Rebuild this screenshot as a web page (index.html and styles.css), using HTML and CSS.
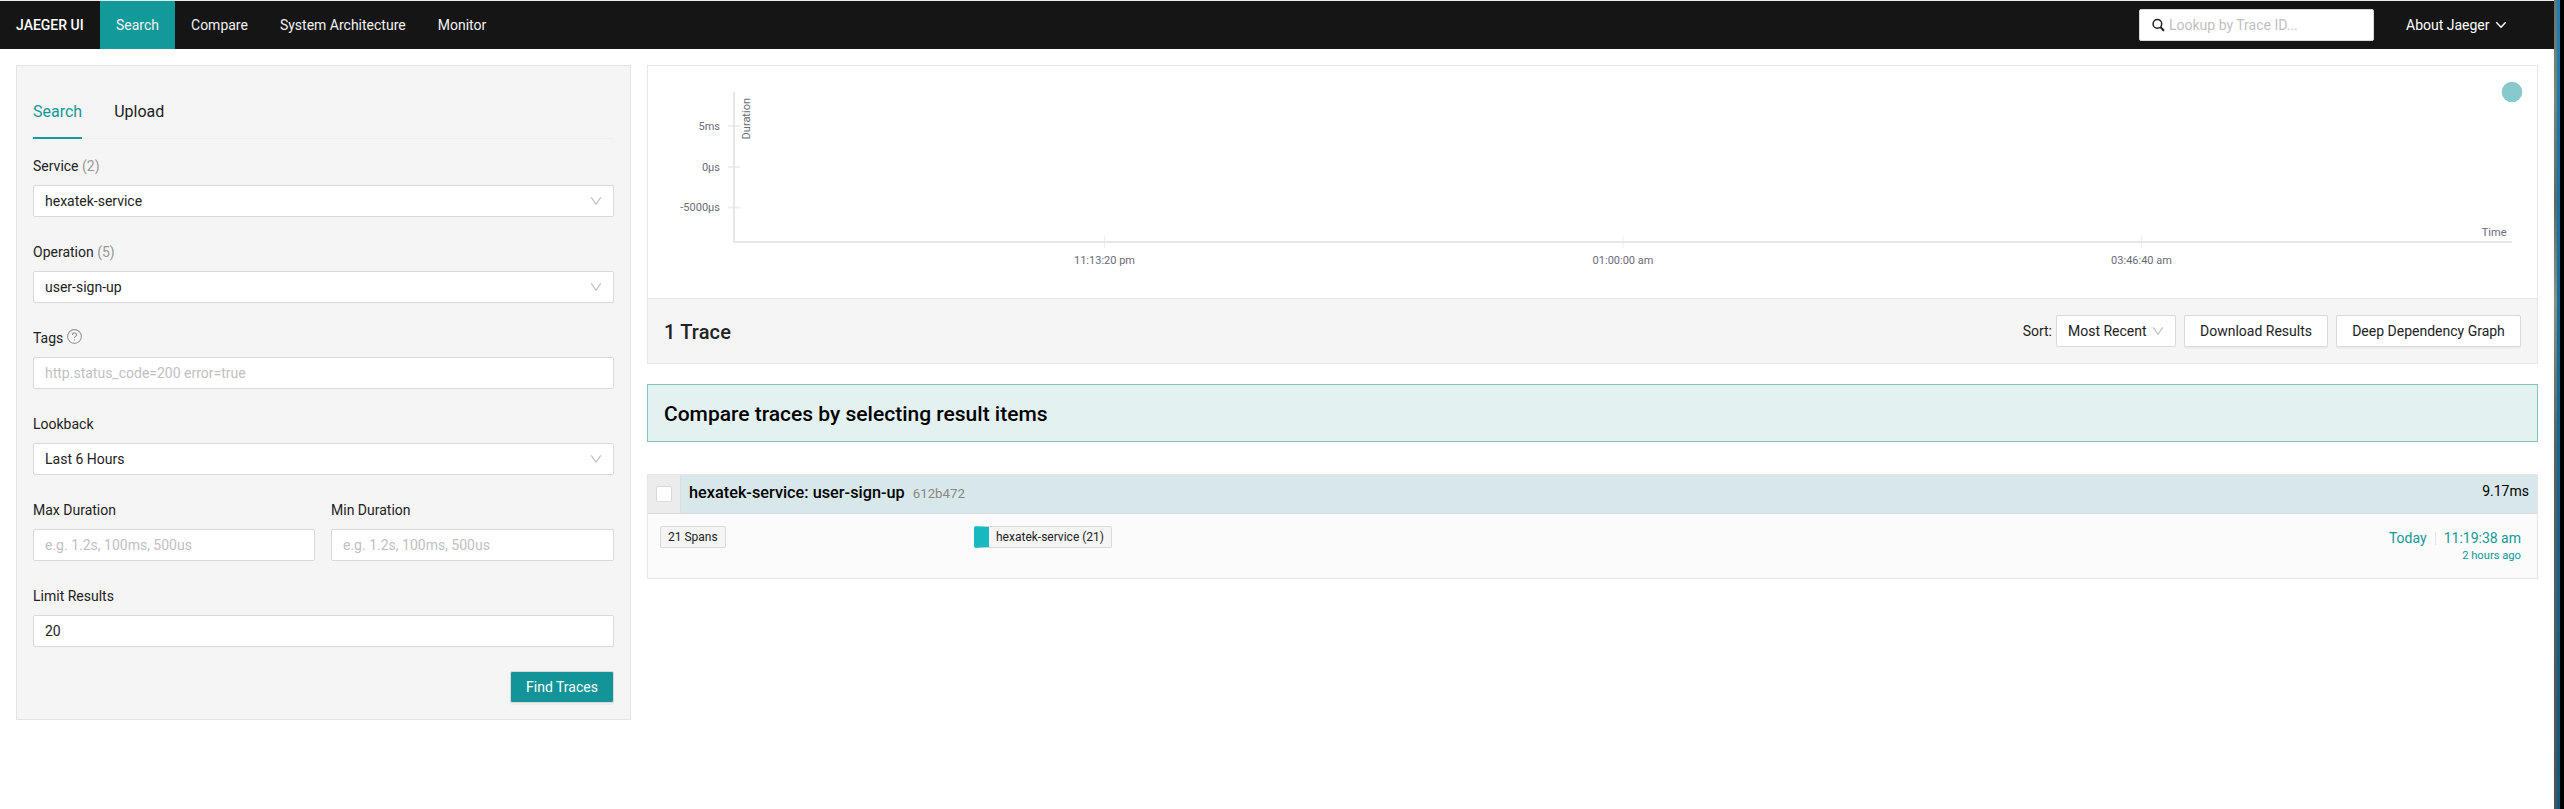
FILE: index.html
```html
<!DOCTYPE html>
<html lang="en">
<head>
<meta charset="utf-8">
<title>Jaeger UI</title>
<link rel="stylesheet" href="styles.css">
</head>
<body>
<div class="app">
  <div class="page">
    <nav class="nav">
      <a class="nav-item brand">JAEGER UI</a>
      <a class="nav-item active">Search</a>
      <a class="nav-item">Compare</a>
      <a class="nav-item">System Architecture</a>
      <a class="nav-item">Monitor</a>
      <div class="lookup">
        <svg class="lookup-icon" viewBox="0 0 13 14"><circle cx="5.4" cy="5.9" r="4.3" fill="none" stroke="#222" stroke-width="1.500"/><path d="M8.6 9.2 12 12.800" stroke="#222" stroke-width="2"/></svg>
        <span class="placeholder">Lookup by Trace ID...</span>
      </div>
      <a class="about">About Jaeger <svg class="about-icon" viewBox="0 0 12 8"><path d="M1.3 1.3 6 6.2l4.700-4.900" fill="none" stroke="#fff" stroke-width="1.5"/></svg></a>
    </nav>
    <main class="main">
      <aside class="panel">
        <div class="tabs"><span class="tab selected">Search</span><span class="tab">Upload</span></div>
        <div class="field"><div class="label">Service <span class="muted">(2)</span></div>
          <div class="control"><span>hexatek-service</span><svg class="caret" viewBox="0 0 12 12"><path d="M1.200 2.300 6 9.300l4.800-7"/></svg></div></div>
        <div class="field"><div class="label">Operation <span class="muted">(5)</span></div>
          <div class="control"><span>user-sign-up</span><svg class="caret" viewBox="0 0 12 12"><path d="M1.200 2.300 6 9.300l4.800-7"/></svg></div></div>
        <div class="field"><div class="label">Tags <svg class="help" viewBox="0 0 14 14"><circle cx="7" cy="7" r="6.400"/><path d="M5.100 5.600C5.100 3 8.900 3 8.900 5.500 8.900 7 7 6.900 7 8.500M7 9.600v1.100"/></svg></div>
          <div class="control"><span class="placeholder">http.status_code=200 error=true</span></div></div>
        <div class="field"><div class="label">Lookback</div>
          <div class="control"><span>Last 6 Hours</span><svg class="caret" viewBox="0 0 12 12"><path d="M1.200 2.300 6 9.300l4.800-7"/></svg></div></div>
        <div class="pair">
          <div class="field"><div class="label">Max Duration</div><div class="control"><span class="placeholder">e.g. 1.2s, 100ms, 500us</span></div></div>
          <div class="field"><div class="label">Min Duration</div><div class="control"><span class="placeholder">e.g. 1.2s, 100ms, 500us</span></div></div>
        </div>
        <div class="field"><div class="label">Limit Results</div><div class="control"><span>20</span></div></div>
        <div class="actions"><button class="find">Find Traces</button></div>
      </aside>
      <section class="results">
        <div class="summary">
          <svg class="chart" width="1889" height="232" viewBox="648 66 1889 232">
            <g class="ticks">
              <path d="M728 126h12M728 167h12M728 207.500h12" stroke-width="2"/>
              <path d="M1104.500 236v12M1623 236v12M2141.500 236v12"/>
            </g>
            <path class="axis" d="M734 92v150M734 242h1778"/>
            <g class="tick-text">
              <text x="720" y="130" text-anchor="end">5ms</text>
              <text x="720" y="171" text-anchor="end">0μs</text>
              <text x="720" y="211" text-anchor="end">-5000μs</text>
              <text x="1104.500" y="264" text-anchor="middle">11:13:20 pm</text>
              <text x="1623" y="264" text-anchor="middle">01:00:00 am</text>
              <text x="2141.500" y="264" text-anchor="middle">03:46:40 am</text>
              <text x="2506.500" y="236" text-anchor="end">Time</text>
              <text transform="translate(750 98) rotate(-90)" text-anchor="end">Duration</text>
            </g>
            <circle class="dot" cx="2512" cy="92" r="10.300"/>
          </svg>
          <div class="toolbar">
            <h2 class="count">1 Trace</h2>
            <span class="sort">Sort:</span>
            <div class="control sort-select"><span>Most Recent</span><svg class="caret" viewBox="0 0 12 12"><path d="M1.200 2.300 6 9.300l4.800-7"/></svg></div>
            <button class="btn download">Download Results</button>
            <button class="btn graph">Deep Dependency Graph</button>
          </div>
        </div>
        <div class="compare">Compare traces by selecting result items</div>
        <article class="trace">
          <header class="trace-head">
            <div class="check-cell"><span class="check"></span></div>
            <div class="trace-title"><span class="name">hexatek-service: user-sign-up</span><span class="id">612b472</span><span class="duration">9.17ms</span></div>
          </header>
          <div class="trace-body">
            <div class="span-col"><span class="tag">21 Spans</span></div>
            <div class="service-col"><span class="tag service">hexatek-service (21)</span></div>
            <div class="when">
              <div class="when-line"><span>Today</span><i class="divider"></i><span>11:19:38 am</span></div>
              <small class="ago">2 hours ago</small>
            </div>
          </div>
        </article>
      </section>
    </main>
  </div>
  <div class="wallpaper"></div>
</div>
</body>
</html>
```
FILE: styles.css
```css
* { box-sizing: border-box; }
body { margin: 0; background: #fff; color: #222; font: 14px/21px Roboto, sans-serif; }
.app { display: flex; height: 809px; overflow: hidden; }
.page { width: 2554px; border-top: 1px solid #e8ebeb; }
.nav { display: flex; align-items: center; height: 48px; background: #151515; color: #fff; }
.nav-item { padding: 0 16px; line-height: 48px; color: #f2f2f2; }
.brand { width: 100px; font-weight: 500; color: #fff; white-space: nowrap; }
.active { background: #129999; }
.lookup { display: flex; align-items: center; width: 235px; height: 32px; margin-left: auto; padding-left: 12px; background: #fff; border: 1px solid #d9d9d9; border-radius: 2px; }
.lookup-icon { width: 13px; height: 14px; margin-right: 4px; }
.placeholder { color: #bfbfbf; }
.about { display: flex; align-items: center; justify-content: space-between; width: 101px; margin: 0 47px 0 32px; white-space: nowrap; }
.about-icon { width: 12px; height: 8px; }
.main { display: flex; gap: 16px; align-items: flex-start; padding: 16px; }
.panel { width: 615px; height: 655px; padding: 16px; background: #f5f5f5; border: 1px solid #e4e4e4; }
.tabs { display: flex; gap: 32px; height: 57px; margin-bottom: 16px; border-bottom: 1px solid #eee; font-size: 16px; line-height: 59px; }
.tab { height: 57px; }
.selected { color: #129999; border-bottom: 2px solid #129999; }
.field { flex: 1; height: 86px; }
.label { height: 30px; line-height: 22px; }
.muted { color: #999; }
.control { display: flex; align-items: center; justify-content: space-between; height: 32px; padding: 0 11px; background: #fff; border: 1px solid #d9d9d9; border-radius: 2px; }
.caret { width: 12px; height: 12px; fill: none; stroke: #bfbfbf; stroke-width: 1.2; }
.help { width: 15px; height: 15px; vertical-align: -1px; fill: none; stroke: #999; stroke-width: 1; }
.pair { display: grid; grid-template-columns: 282px 283px; gap: 16px; }
.actions { display: flex; justify-content: flex-end; }
.find, .btn { height: 32px; padding: 0; font: inherit; border: 1px solid #d9d9d9; border-radius: 2px; box-shadow: 0 2px 0 rgba(0, 0, 0, .03); }
.find { width: 104px; background: #129499; color: #fff; }
.results { width: 1891px; }
.summary { height: 299px; border: 1px solid #e6e6e6; }
.chart { display: block; }
.ticks { stroke: #eee; }
.axis { fill: none; stroke: #e6e6e9; stroke-width: 2; }
.tick-text { fill: #6b6b76; font-size: 11px; }
.dot { fill: #88c9cb; }
.toolbar { display: flex; align-items: center; height: 65px; padding: 0 16px; background: #f5f5f5; border-top: 1px solid #e6e6e6; }
.count { margin: 0 auto 0 0; padding-top: 2px; font-size: 20px; font-weight: 500; letter-spacing: .15px; }
.sort { margin-right: 4px; }
.sort-select { width: 120px; }
.btn { margin-left: 8px; background: #fff; color: #222; }
.download { width: 144px; }
.graph { width: 185px; }
.compare { height: 58px; margin-top: 20px; padding-left: 16px; background: #e4f1f1; border: 1px solid #7fc4bd; color: #000; font-size: 21px; font-weight: 500; line-height: 58px; }
.trace { height: 105px; margin-top: 32px; background: #fbfbfb; border: 1px solid #e6e6e6; }
.trace-head { display: flex; height: 39px; border-bottom: 1px solid #d6dadb; }
.check-cell { width: 33px; padding: 11px 8px; background: #ececec; border-right: 1px solid #ddd; }
.check { display: block; width: 16px; height: 16px; background: #fff; border: 1px solid #d9d9d9; border-radius: 2px; }
.trace-title { display: flex; flex: 1; align-items: baseline; padding: 7px 8px 0; background: #d8e7ea; color: #000; }
.name { font-size: 16.300px; font-weight: 500; }
.id { margin-left: 8px; color: #888; font-size: 13.300px; }
.duration { margin-left: auto; font-size: 14px; position: relative; top: -2px; }
.trace-body { display: flex; padding: 12px 16px 0 12px; }
.span-col { width: 314px; }
.tag { display: inline-block; height: 22px; padding: 0 7px; background: #f5f5f5; border: 1px solid #d9d9d9; border-radius: 2px; font-size: 12px; line-height: 20px; }
.service { border-left: 15px solid #17b8be; }
.when { margin-left: auto; padding-top: 2px; color: #199; text-align: right; }
.when-line { display: flex; align-items: center; }
.divider { width: 1px; height: 13px; margin: 0 8px; background: #e2e8e8; }
.ago { display: block; font-size: 11.200px; line-height: 14px; }
.wallpaper { width: 10px; background: linear-gradient(90deg, transparent 6px, #000 6px), linear-gradient(#1a80bc, #146ca0 40%, #10587f) 3px 0 / 3px 100% no-repeat, linear-gradient(#6b7468, #7b8570 12%, #5e6860 25%, #87907a 37%, #58625b 55%, #4c5450); }
```
